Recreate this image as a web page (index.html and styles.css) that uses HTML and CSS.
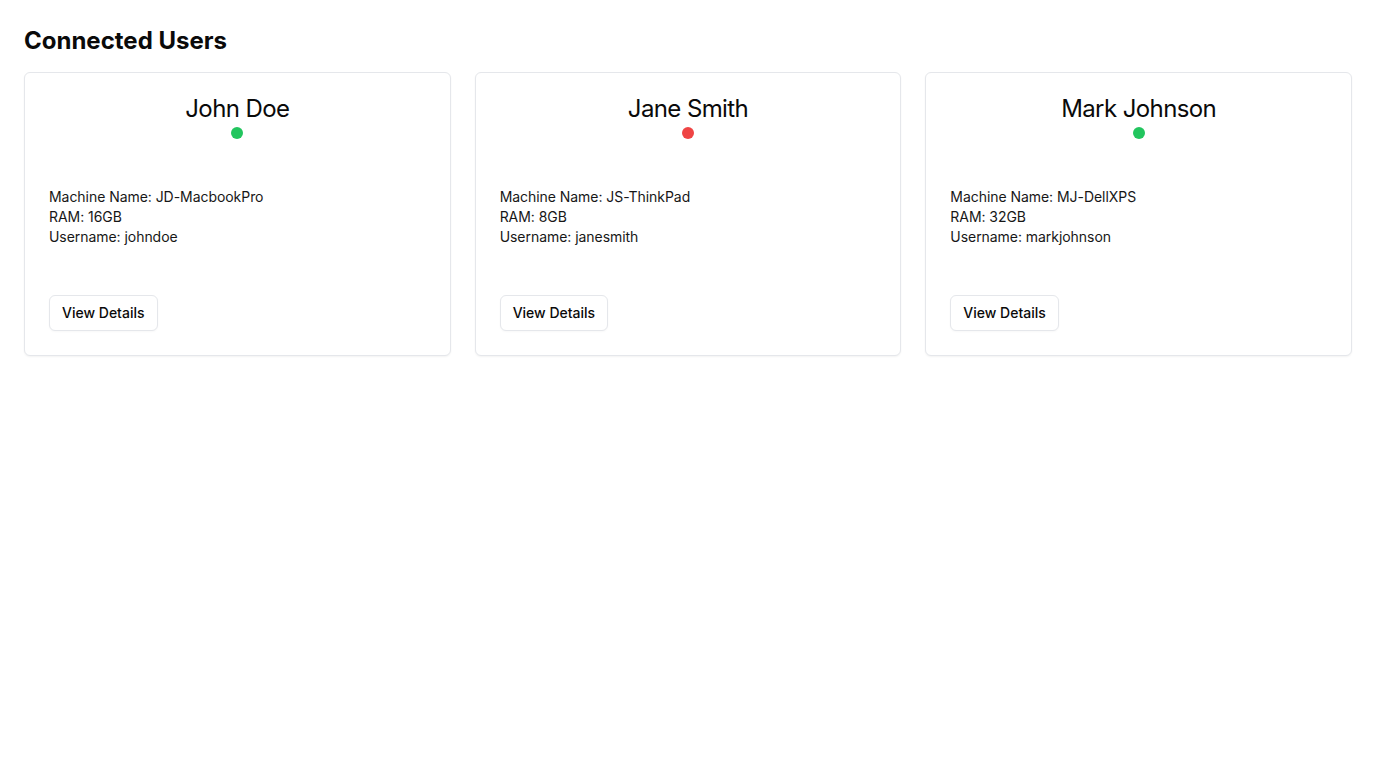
FILE: index.html
```html
<!DOCTYPE html>
<html>
<head>
<meta charset="utf-8">
<link rel="stylesheet" href="styles.css">
</head>
<body>
<main class="page">
  <h1 class="page-title">Connected Users</h1>
  <div class="grid">
    <div class="card">
      <div class="card-header">
        <h2 class="card-title">John Doe</h2>
        <span class="dot dot-online"></span>
      </div>
      <div class="card-content">
        <p>Machine Name: JD-MacbookPro</p>
        <p>RAM: 16GB</p>
        <p>Username: johndoe</p>
      </div>
      <div class="card-footer">
        <button class="btn">View Details</button>
      </div>
    </div>
    <div class="card">
      <div class="card-header">
        <h2 class="card-title">Jane Smith</h2>
        <span class="dot dot-offline"></span>
      </div>
      <div class="card-content">
        <p>Machine Name: JS-ThinkPad</p>
        <p>RAM: 8GB</p>
        <p>Username: janesmith</p>
      </div>
      <div class="card-footer">
        <button class="btn">View Details</button>
      </div>
    </div>
    <div class="card">
      <div class="card-header">
        <h2 class="card-title">Mark Johnson</h2>
        <span class="dot dot-online"></span>
      </div>
      <div class="card-content">
        <p>Machine Name: MJ-DellXPS</p>
        <p>RAM: 32GB</p>
        <p>Username: markjohnson</p>
      </div>
      <div class="card-footer">
        <button class="btn">View Details</button>
      </div>
    </div>
  </div>
</main>
</body>
</html>
```
FILE: styles.css
```css
* { box-sizing: border-box; }
html, body { margin: 0; padding: 0; background: #fff; }
body {
  font-family: Inter, "Noto Sans", sans-serif;
  color: #0a0a0a;
}
.page { padding: 24px; }
.page-title {
  margin: 0 0 16px 0;
  font-size: 24px;
  line-height: 32px;
  font-weight: 700;
  padding-top: 1px;
  height: 32px;
}
.grid {
  display: grid;
  grid-template-columns: repeat(3, 1fr);
  gap: 24px;
}
.card {
  border: 1px solid #e5e7eb;
  border-radius: 6px;
  box-shadow: 0 1px 2px rgba(0,0,0,0.05);
  background: #fff;
  display: flex;
  flex-direction: column;
}
.card-header {
  padding: 24px 24px 24px;
  display: flex;
  flex-direction: column;
  align-items: center;
  gap: 6px;
}
.card-title {
  margin: 0;
  font-size: 24px;
  line-height: 24px;
  font-weight: 400;
  letter-spacing: -0.6px;
}
.dot {
  width: 12px;
  height: 12px;
  border-radius: 50%;
  display: block;
}
.dot-online { background: #22c55e; }
.dot-offline { background: #ef4444; }
.card-content {
  padding: 24px 24px 48px;
  font-size: 14px;
  line-height: 20px;
  color: #171717;
  letter-spacing: -0.05px;
}
.card-content p { margin: 0; }
.card-footer {
  padding: 0 24px 24px;
  display: flex;
}
.btn {
  font-family: Inter, "Noto Sans", sans-serif;
  font-size: 14px;
  line-height: 20px;
  font-weight: 500;
  color: #0a0a0a;
  background: #fff;
  border: 1px solid #e5e7eb;
  border-radius: 6px;
  height: 36px;
  padding: 0 12px;
  box-shadow: 0 1px 2px rgba(0,0,0,0.03);
}
```
